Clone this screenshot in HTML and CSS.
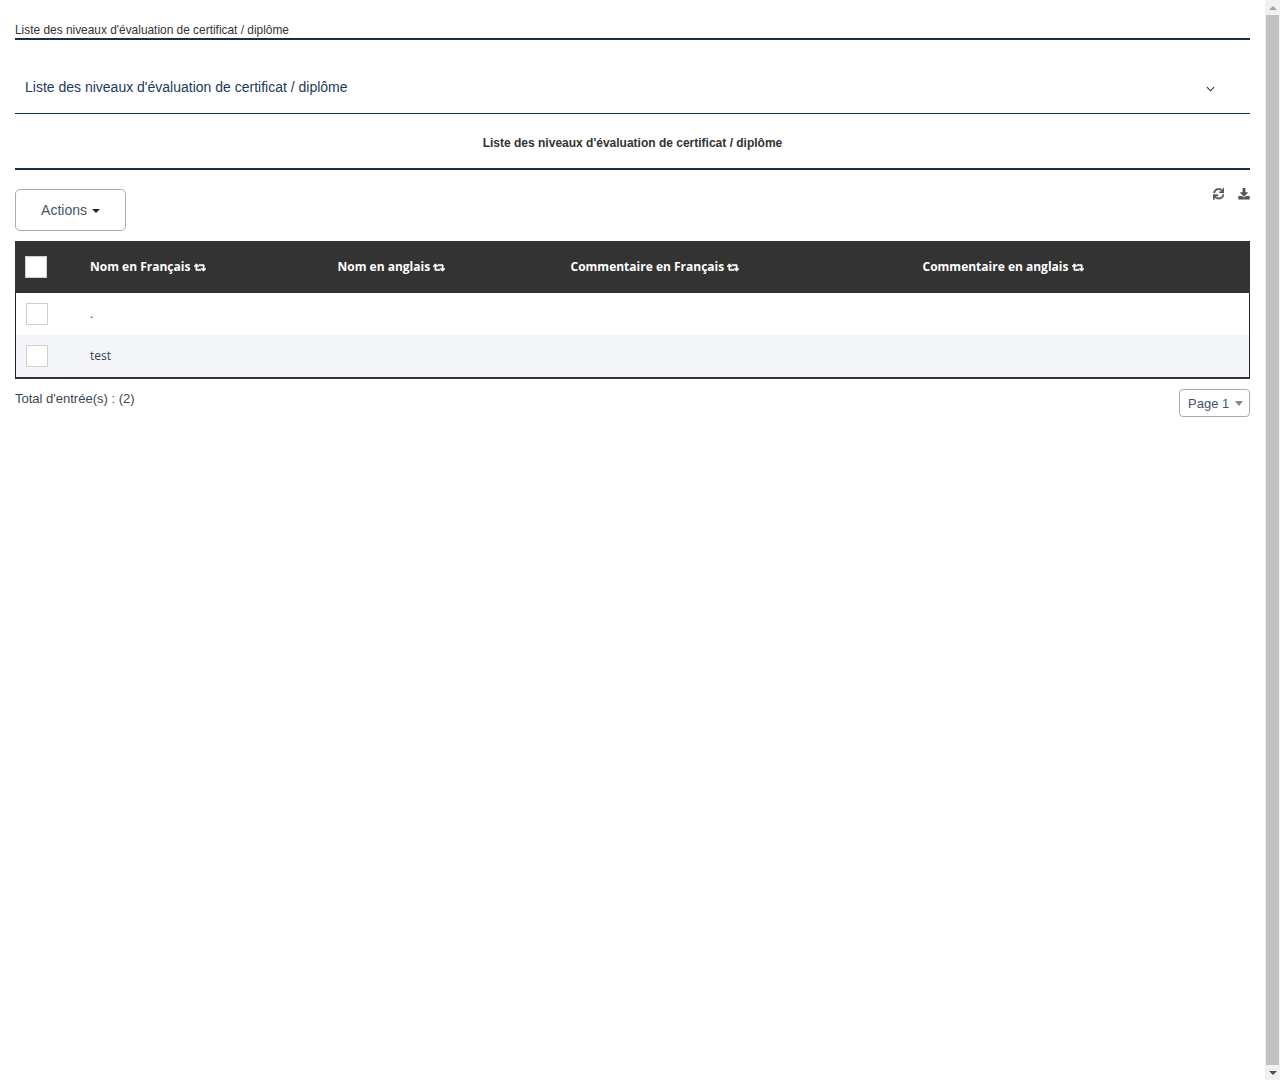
FILE: index.html
```html
<!DOCTYPE html>
<html lang="fr">
<head>
<meta charset="utf-8">
<title>Liste des niveaux d'évaluation de certificat / diplôme</title>
<link rel="stylesheet" href="styles.css">
</head>
<body>
<svg class="defs" aria-hidden="true">
  <symbol id="retweet" viewBox="0 0 640 512"><path d="M629.657 343.598L528.971 444.284c-9.373 9.372-24.568 9.372-33.941 0L394.343 343.598c-9.373-9.373-9.373-24.569 0-33.941l10.823-10.823c9.562-9.562 25.133-9.34 34.419.492L480 342.118V160H292.451a24.005 24.005 0 0 1-16.971-7.029l-16-16C244.361 121.851 255.069 96 276.451 96H520c13.255 0 24 10.745 24 24v222.118l40.416-43.792c9.285-9.831 24.856-10.054 34.419-.492l10.823 10.823c9.372 9.372 9.372 24.569-.001 33.941zm-265.138 15.431A23.999 23.999 0 0 0 347.548 352H160V169.881l40.416 43.792c9.286 9.831 24.856 10.054 34.419.491l10.822-10.822c9.373-9.373 9.373-24.569 0-33.941L144.971 68.716c-9.373-9.373-24.569-9.373-33.941 0L10.343 169.402c-9.373 9.373-9.373 24.569 0 33.941L21.166 214.164c9.563 9.563 25.133 9.34 34.419-.491L96 169.881V392c0 13.255 10.745 24 24 24h243.549c21.382 0 32.09-25.851 16.971-40.971l-16.001-16z"/></symbol>
</svg>
<div class="window">
  <main class="page">
    <div class="breadcrumb">Liste des niveaux d'évaluation de certificat / diplôme</div>
    <div class="accordion">
      <span class="accordion-title">Liste des niveaux d'évaluation de certificat / diplôme</span>
      <svg class="chevron" viewBox="0 0 10 6"><path d="M1 1l4 4 4-4" fill="none" stroke="currentColor" stroke-width="1.2"/></svg>
    </div>
    <h1 class="heading">Liste des niveaux d'évaluation de certificat / diplôme</h1>
    <div class="toolbar">
      <button class="actions" type="button">Actions <span class="caret"></span></button>
      <div class="tools">
        <svg class="tool tool-bold" viewBox="0 0 512 512"><path d="M440.65 12.57l4 82.77A247.16 247.16 0 0 0 255.83 8C134.73 8 33.91 94.92 12.29 209.82A12 12 0 0 0 24.09 224h49.05a12 12 0 0 0 11.67-9.26 175.91 175.91 0 0 1 317-56.94l-101.46-4.86a12 12 0 0 0-12.57 12v47.41a12 12 0 0 0 12 12H500a12 12 0 0 0 12-12V12a12 12 0 0 0-12-12h-47.37a12 12 0 0 0-11.98 12.57zM255.83 432a175.61 175.61 0 0 1-146-77.8l101.8 4.87a12 12 0 0 0 12.57-12v-47.4a12 12 0 0 0-12-12H12a12 12 0 0 0-12 12V500a12 12 0 0 0 12 12h47.35a12 12 0 0 0 12-12.6l-4.15-82.57A247.17 247.17 0 0 0 255.83 504c121.11 0 221.93-86.92 243.55-201.82a12 12 0 0 0-11.8-14.18h-49.05a12 12 0 0 0-11.67 9.26A175.86 175.86 0 0 1 255.83 432z"/></svg>
        <svg class="tool" viewBox="0 0 512 512"><path d="M216 0h80c13.3 0 24 10.7 24 24v168h87.7c17.8 0 26.7 21.5 14.1 34.1L269.7 378.3c-7.5 7.5-19.8 7.5-27.3 0L90.1 226.1c-12.6-12.6-3.7-34.1 14.1-34.1H192V24c0-13.3 10.7-24 24-24zm296 376v112c0 13.3-10.7 24-24 24H24c-13.3 0-24-10.7-24-24V376c0-13.3 10.7-24 24-24h146.7l49 49c20.1 20.1 52.5 20.1 72.6 0l49-49H488c13.3 0 24 10.7 24 24z"/></svg>
      </div>
    </div>
    <div class="table">
      <div class="row head">
        <div class="cell-check"><span class="box box-head"></span></div>
        <div class="cell">Nom en Français <svg class="sort"><use href="#retweet"/></svg></div>
        <div class="cell">Nom en anglais <svg class="sort"><use href="#retweet"/></svg></div>
        <div class="cell">Commentaire en Français <svg class="sort"><use href="#retweet"/></svg></div>
        <div class="cell">Commentaire en anglais <svg class="sort"><use href="#retweet"/></svg></div>
      </div>
      <div class="row body">
        <div class="cell-check"><span class="box"></span></div>
        <div class="cell">.</div><div class="cell"></div><div class="cell"></div><div class="cell"></div>
      </div>
      <div class="row body alt">
        <div class="cell-check"><span class="box"></span></div>
        <div class="cell">test</div><div class="cell"></div><div class="cell"></div><div class="cell"></div>
      </div>
    </div>
    <div class="footer">
      <span class="total">Total d'entrée(s) : (2)</span>
      <div class="pager">Page 1 <span class="pager-caret"></span></div>
    </div>
  </main>
  <aside class="scrollbar">
    <span class="arrow arrow-up"></span>
    <span class="thumb"></span>
    <span class="arrow arrow-down"></span>
  </aside>
</div>
</body>
</html>
```

FILE: styles.css
```css
* { box-sizing: border-box; }
html, body { margin: 0; height: 1080px; overflow: hidden; background: #fff; }
body { font-family: "Liberation Sans", Arial, sans-serif; color: #333; }
.defs { width: 0; height: 0; display: block; }
.window { display: flex; height: 1080px; }
.page { flex: 1; min-width: 0; padding: 0 15px; }
.breadcrumb { height: 40px; padding-top: 23px; font-size: 11.9px; line-height: 14px; border-bottom: 2px solid #12304f; }
.accordion { height: 74px; display: flex; align-items: center; justify-content: space-between; padding: 20px 35px 0 10px; border-bottom: 1px solid #12304f; color: #1d3a58; font-size: 14px; }
.chevron { width: 9px; height: 6px; margin-top: 5px; color: #12304f; }
.heading { margin: 0; height: 56px; padding: 22px 0 0 0; text-align: center; font-size: 12px; line-height: 14px; font-weight: 700; color: #333; border-bottom: 2px solid #12304f; }
.toolbar { display: flex; justify-content: space-between; align-items: flex-start; padding-top: 19px; height: 71px; }
.actions { width: 111px; height: 42px; background: #fff; border: 1px solid #aaa; border-radius: 5px; font: 14px "Liberation Sans", Arial, sans-serif; color: #44546a; padding: 0; }
.caret { display: inline-block; width: 0; height: 0; margin-left: 1px; vertical-align: middle; border-left: 4px solid transparent; border-right: 4px solid transparent; border-top: 4px solid #222; }
.tools { display: flex; gap: 14px; margin-top: -1px; }
.tool { width: 12px; height: 11.5px; fill: #555; display: block; }
.tool-bold { width: 11.5px; stroke: #555; stroke-width: 14; }
.table { border-left: 1px solid #222; border-right: 1px solid #222; border-bottom: 2px solid #333; font-family: "Open Sans", sans-serif; font-size: 12px; }
.row { display: grid; grid-template-columns: 74px 247.5px 233px 352px 1fr; align-items: center; }
.head { height: 52px; background: #333; color: #fff; font-weight: 700; margin: 0 -1px; padding-left: 1px; }
.body { height: 42px; color: #2f3e4c; }
.alt { background: #f3f5f9; }
.cell { margin-top: -2px; }
.cell-check { display: flex; padding-left: 10px; }
.box { display: block; width: 22px; height: 22px; background: #fff; border: 1px solid #d2cec8; }
.box-head { margin-left: -1px; }
.sort { width: 12px; height: 11px; fill: #fff; stroke: #fff; stroke-width: 30; overflow: visible; vertical-align: -2px; }
.footer { display: flex; justify-content: space-between; align-items: flex-start; padding-top: 10px; }
.total { font-size: 13px; line-height: 18px; margin-top: 1px; color: #3a4654; }
.pager { width: 71px; height: 28px; border: 1px solid #aaa; border-radius: 4px; padding-left: 8px; font-size: 13px; line-height: 27px; color: #44546a; display: flex; align-items: center; gap: 6px; white-space: nowrap; }
.pager-caret { width: 0; height: 0; border-left: 4px solid transparent; border-right: 4px solid transparent; border-top: 5px solid #888; }
.scrollbar { width: 15px; flex: none; background: #f1f1f1; display: flex; flex-direction: column; align-items: center; }
.thumb { flex: 1; width: 13px; background: #c1c1c1; }
.arrow { height: 15px; width: 15px; display: flex; align-items: center; justify-content: center; }
.arrow::before { content: ""; border-left: 4px solid transparent; border-right: 4px solid transparent; }
.arrow-up::before { border-bottom: 4px solid #a3a3a3; }
.arrow-down::before { border-top: 4px solid #505050; }
```
